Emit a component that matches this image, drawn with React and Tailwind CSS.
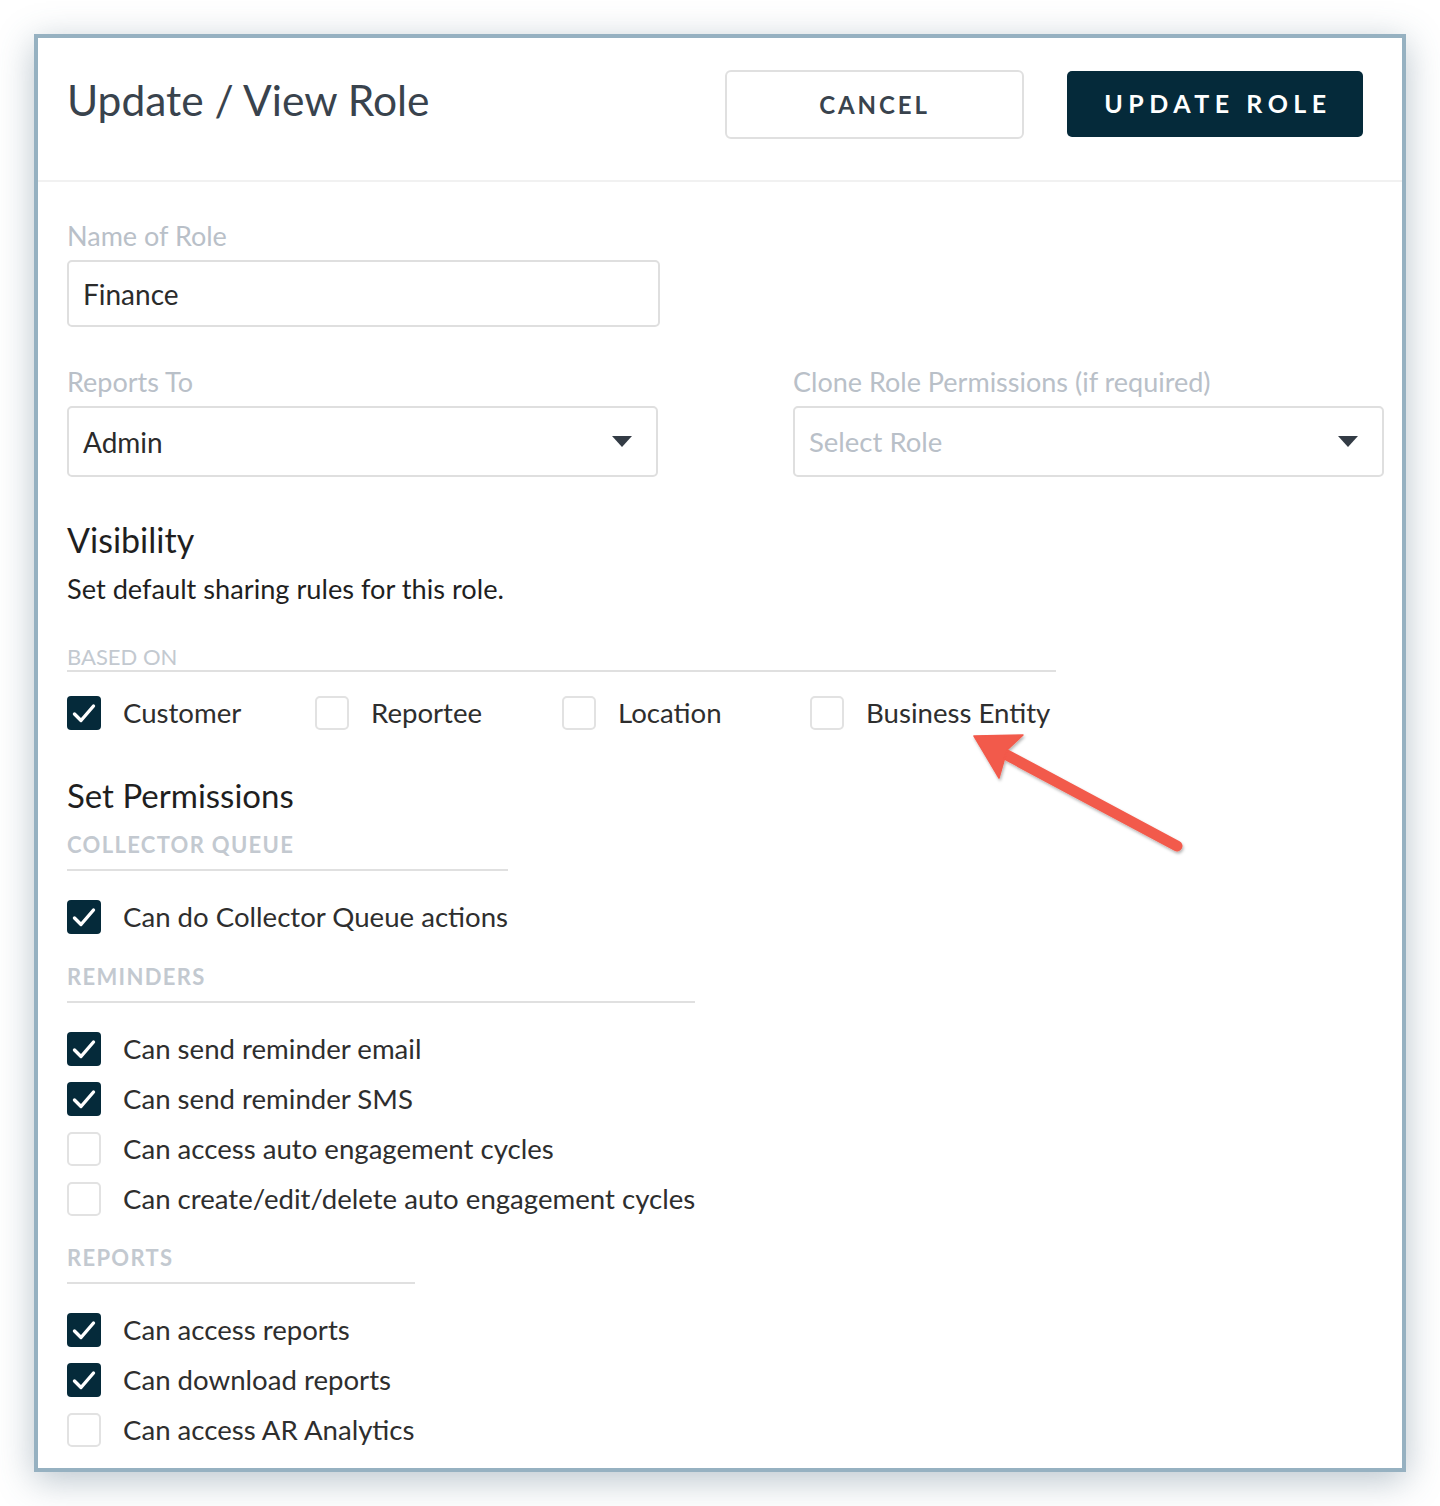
import React from "react";

const font = { fontFamily: "Lato, 'Open Sans', sans-serif" };

function Box({ checked }) {
  if (checked) {
    return (
      <span className="flex h-[34px] w-[34px] shrink-0 items-center justify-center rounded-[4px] bg-[#052a3a]">
        <svg width="34" height="34" viewBox="0 0 34 34" fill="none">
          <path d="M7.5 18l6.5 6.5L26.5 10" stroke="#fff" strokeWidth="3.4" strokeLinecap="round" strokeLinejoin="round" />
        </svg>
      </span>
    );
  }
  return <span className="block h-[34px] w-[34px] shrink-0 rounded-[5px] border-2 border-[#e2e2e2] bg-white" />;
}

function Item({ checked, label }) {
  return (
    <div className="flex h-[34px] items-center gap-[22px]">
      <Box checked={checked} />
      <span className="text-[27.6px] leading-[34px] text-[#2e2e2e]">{label}</span>
    </div>
  );
}

function Section({ title, items, mt }) {
  return (
    <div className={`w-fit ${mt}`}>
      <div className="border-b-2 border-[#e0e0e0] pb-[12px] text-[22px] font-bold leading-[24px] tracking-[0.06em] text-[#c3c9d0]">
        {title}
      </div>
      <div className="mt-[29px] flex flex-col gap-[16px]">
        {items.map((it) => (
          <Item key={it[0]} label={it[0]} checked={it[1]} />
        ))}
      </div>
    </div>
  );
}

function Caret() {
  return (
    <svg width="20" height="11" viewBox="0 0 20 11">
      <path d="M0 0h20L10 11z" fill="#333b45" />
    </svg>
  );
}

export default function App() {
  return (
    <div className="min-h-[1506px] bg-white pl-[34px] pt-[34px]" style={font}>
      <div className="relative h-[1438px] w-[1372px] border-4 border-[#96b1c1] bg-white shadow-[0_8px_34px_rgba(70,100,120,0.38)]">
        <div className="flex h-[144px] items-start border-b-2 border-[#f1f1f1] pl-[29px] pr-[39px]">
          <h1 className="mt-[38px] text-[42.5px] font-normal leading-[48px] text-[#39434d]">Update / View Role</h1>
          <div className="ml-auto mt-[32px] flex gap-[43px]">
            <button className="h-[69px] w-[299px] rounded-[6px] border-2 border-[#e0e0e0] bg-white text-[24px] font-bold tracking-[0.12em] text-[#39434d]">
              CANCEL
            </button>
            <button className="mt-[1px] h-[66px] w-[296px] rounded-[5px] bg-[#052a3a] pl-[6px] text-[25px] font-bold tracking-[0.22em] text-white">
              UPDATE ROLE
            </button>
          </div>
        </div>

        <div className="pl-[29px] pt-[40px]">
          <div className="text-[27px] leading-[28px] text-[#b9c0c8]">Name of Role</div>
          <div className="mt-[10px] flex h-[67px] w-[593px] items-center rounded-[5px] border-2 border-[#dfdfdf] px-[14px] text-[28px] text-[#2b2b2b]">
            Finance
          </div>

          <div className="mt-[41px] flex gap-[135px]">
            <div className="w-[591px]">
              <div className="text-[27px] leading-[28px] text-[#b9c0c8]">Reports To</div>
              <div className="mt-[10px] flex h-[71px] items-center justify-between rounded-[5px] border-2 border-[#dfdfdf] pl-[14px] pr-[24px] text-[28px] text-[#2b2b2b]">
                <span>Admin</span>
                <Caret />
              </div>
            </div>
            <div className="w-[591px]">
              <div className="text-[27px] leading-[28px] text-[#b9c0c8]">Clone Role Permissions (if required)</div>
              <div className="mt-[10px] flex h-[71px] items-center justify-between rounded-[5px] border-2 border-[#dfdfdf] pl-[14px] pr-[24px] text-[27.5px] text-[#b9c0c8]">
                <span>Select Role</span>
                <Caret />
              </div>
            </div>
          </div>

          <h2 className="mt-[45px] text-[34px] font-normal leading-[36px] text-[#1f1f1f]">Visibility</h2>
          <p className="mt-[16px] text-[27.2px] leading-[30px] text-[#1f1f1f]">Set default sharing rules for this role.</p>

          <div className="mt-[41px] w-[989px] border-b-2 border-[#e0e0e0] pb-[1px] text-[22px] leading-[24px] text-[#c3c9d0]">
            BASED ON
          </div>
          <div className="mt-[24px] flex">
            <div className="w-[248px]"><Item checked label="Customer" /></div>
            <div className="w-[247px]"><Item label="Reportee" /></div>
            <div className="w-[248px]"><Item label="Location" /></div>
            <div><Item label="Business Entity" /></div>
          </div>

          <h2 className="mt-[47px] text-[33px] font-normal leading-[36px] text-[#1f1f1f]">Set Permissions</h2>

          <Section mt="mt-[20px]" title="COLLECTOR QUEUE" items={[["Can do Collector Queue actions", true]]} />
          <Section
            mt="mt-[31px]"
            title="REMINDERS"
            items={[
              ["Can send reminder email", true],
              ["Can send reminder SMS", true],
              ["Can access auto engagement cycles", false],
              ["Can create/edit/delete auto engagement cycles", false],
            ]}
          />
          <Section
            mt="mt-[30px]"
            title="REPORTS"
            items={[
              ["Can access reports", true],
              ["Can download reports", true],
              ["Can access AR Analytics", false],
            ]}
          />
        </div>

        <svg className="absolute left-[887px] top-[650px]" width="280" height="180" viewBox="0 0 280 180">
          <defs>
            <filter id="sh" x="-20%" y="-20%" width="140%" height="140%">
              <feDropShadow dx="1" dy="2" stdDeviation="1.6" floodColor="#000" floodOpacity="0.3" />
            </filter>
          </defs>
          <g filter="url(#sh)" fill="#f25a4b" stroke="#f25a4b">
            <path d="M252 158L80 66" strokeWidth="11" strokeLinecap="round" fill="none" />
            <path d="M49 48L98 47L82 62L74 90Z" strokeWidth="1.5" strokeLinejoin="round" />
          </g>
        </svg>
      </div>
    </div>
  );
}
